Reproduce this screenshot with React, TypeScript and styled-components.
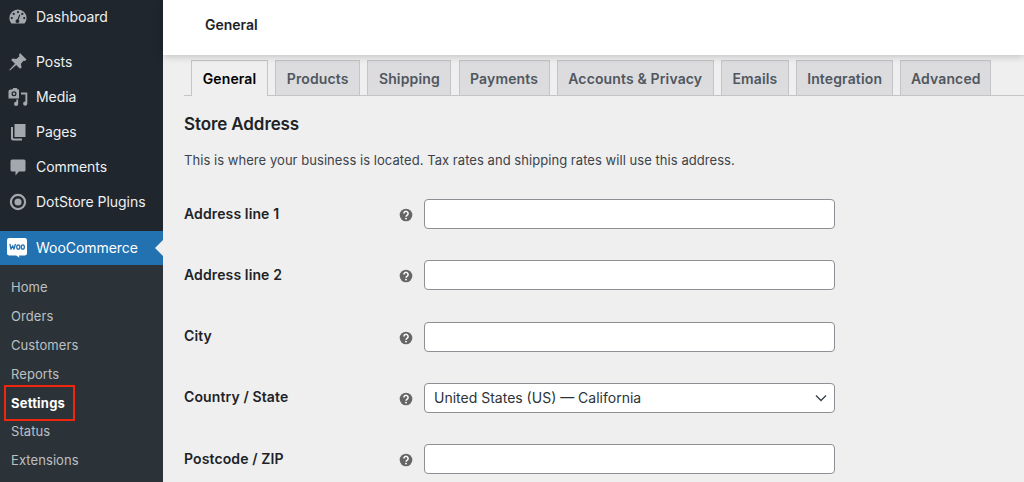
import React from "react";
import styled, { createGlobalStyle } from "styled-components";

const Global = createGlobalStyle`
  html, body { margin: 0; padding: 0; height: 100%; overflow: hidden; background: #f0f0f1; }
  body { font-family: Inter, "Liberation Sans", sans-serif; -webkit-font-smoothing: antialiased; }
  * { box-sizing: border-box; }
`;

const Page = styled.div`
  display: flex;
  width: 1024px;
  height: 482px;
  overflow: hidden;
  background: #efefef;
`;

const Sidebar = styled.nav`
  flex: 0 0 163px;
  height: 482px;
  background: #1f262d;
  display: flex;
  flex-direction: column;
`;

const MenuGroup = styled.div<{ $gap: number }>`
  margin-bottom: ${(p) => p.$gap}px;
`;

const MenuItem = styled.div<{ $short?: boolean }>`
  display: flex;
  align-items: center;
  height: ${(p) => (p.$short ? 33 : 35)}px;
  color: #eef0f1;
  font-size: 14px;
  letter-spacing: -0.05px;
  padding-left: 8px;
  gap: 8px;
  svg { flex: 0 0 20px; }
`;

const ActiveItem = styled(MenuItem)`
  position: relative;
  height: 34px;
  background: #2271b1;
  color: #fff;
  padding-left: 7px;
  gap: 9px;
  &::after {
    content: "";
    position: absolute;
    right: 0;
    top: 9px;
    border: 8px solid transparent;
    border-right-color: #efefef;
    border-left-width: 0;
  }
`;

const Submenu = styled.div`
  flex: 1;
  background: #2c3338;
  padding-top: 8px;
`;

const SubItem = styled.div<{ $current?: boolean }>`
  height: 28.8px;
  display: flex;
  align-items: center;
  padding-left: 11px;
  font-size: 13px;
  letter-spacing: ${(p) => (p.$current ? 0.2 : 0.08)}px;
  color: ${(p) => (p.$current ? "#fff" : "#bcc0c4")};
  font-weight: ${(p) => (p.$current ? 700 : 400)};
`;

const Highlight = styled.span`
  position: relative;
  &::before {
    content: "";
    position: absolute;
    left: -7px;
    right: -10px;
    top: -10px;
    bottom: -10px;
    border: 2px solid #f0270f;
  }
`;

const Main = styled.main`
  flex: 1;
  min-width: 0;
  display: flex;
  flex-direction: column;
`;

const Header = styled.header`
  flex: 0 0 55px;
  background: #fff;
  display: flex;
  align-items: center;
  padding: 0 0 6px 42px;
  font-size: 14px;
  font-weight: 600;
  color: #1d2327;
  box-shadow: 0 1px 8px rgba(0, 0, 0, 0.22);
  position: relative;
  z-index: 1;
`;

const Content = styled.div`
  padding: 5px 0 0 21px;
`;

const Tabs = styled.div`
  display: flex;
  gap: 7.2px;
  height: 36px;
  padding-left: 7px;
  border-bottom: 1px solid #c3c4c7;
`;

const Tab = styled.div<{ $active?: boolean; $w: number }>`
  flex: 0 0 ${(p) => p.$w}px;
  height: ${(p) => (p.$active ? 36 : 35)}px;
  border: 1px solid #c3c4c7;
  border-bottom: none;
  background: ${(p) => (p.$active ? "#efefef" : "#dcdcde")};
  color: ${(p) => (p.$active ? "#000" : "#50575e")};
  display: flex;
  align-items: center;
  justify-content: center;
  font-size: 14px;
  font-weight: 600;
  letter-spacing: 0.14px;
`;

const Title = styled.h2`
  margin: 18px 0 0;
  font-size: 17px;
  letter-spacing: -0.1px;
  line-height: 20px;
  font-weight: 600;
  color: #1d2327;
`;

const Description = styled.p`
  margin: 16px 0 0;
  font-size: 13px;
  letter-spacing: 0.05px;
  line-height: 20px;
  color: #3c434a;
`;

const Form = styled.div`
  margin-top: 29px;
  display: flex;
  flex-direction: column;
  gap: 31.25px;
`;

const Row = styled.div`
  display: grid;
  grid-template-columns: 215px 25px 411px;
  align-items: center;
  height: 30px;
`;

const Label = styled.label`
  font-size: 14px;
  font-weight: 600;
  letter-spacing: 0.12px;
  color: #1d2327;
  position: relative;
  top: -1px;
`;

const Help = styled.span`
  display: flex;
  width: 14px;
  position: relative;
  top: 1px;
`;

const Input = styled.div`
  height: 30px;
  width: 411px;
  background: #fff;
  border: 1px solid #8c8f94;
  border-radius: 4px;
`;

const Select = styled(Input)`
  display: flex;
  align-items: center;
  justify-content: space-between;
  padding: 0 5px 0 9px;
  font-size: 14px;
  color: #2c3338;
`;

const icon = { width: 20, height: 20, viewBox: "0 0 20 20", fill: "#a2a8ad" } as const;

const Dashboard = () => (
  <svg {...icon}><path fillRule="evenodd" d="M3.5 16.5h13A8.2 8.2 0 0 0 18.6 11 8.6 8.6 0 0 0 1.4 11c0 2.1.8 4 2.1 5.5zM10 4a1.1 1.1 0 1 1 0 2.2A1.1 1.1 0 0 1 10 4zM5.7 5.8a1.1 1.1 0 1 1 0 2.2 1.1 1.1 0 0 1 0-2.2zm8.6 0a1.1 1.1 0 1 1 0 2.2 1.1 1.1 0 0 1 0-2.2zM3.8 10a1.1 1.1 0 1 1 0 2.2 1.1 1.1 0 0 1 0-2.2zm12.4 0a1.1 1.1 0 1 1 0 2.2 1.1 1.1 0 0 1 0-2.2zm-4.9-2.6 1 .5-1.7 4.8a1.9 1.9 0 1 1-1.1-.4z" /></svg>
);
const Pin = () => (
  <svg {...icon}><path d="M12 1 18.5 7.5 17 9 15.6 8.7 12.9 11.7 13.6 15.4 12 16.8 8.2 13 2 18.6 1.2 18 7 11.8 3.2 8 4.6 6.4 8.3 7.1 11.3 4.4 11 3z" /></svg>
);
const MediaIcon = () => (
  <svg {...icon}><path fillRule="evenodd" d="M2.5 2.5h1.8l1-1.5h3.4l1 1.5h1.3v9H.5V4.5a2 2 0 0 1 2-2zM6 4.2a2.5 2.5 0 1 0 0 5 2.5 2.5 0 0 0 0-5z" /><circle cx="6" cy="6.7" r="1.2" /><path d="M13 5.5h6.3v11a2.1 2.1 0 1 1-1.9-2V7.5H13z" /><path d="M10.2 12.5v4.2a2.1 2.1 0 1 1-1.9-2v-2.2z" /></svg>
);
const PagesIcon = () => (
  <svg {...icon}><path d="M6.5 2H17.5V15H6.5z" /><path d="M3 5h2v10.5a1 1 0 0 0 1 1H14V18.5H5a2 2 0 0 1-2-2z" /></svg>
);
const CommentIcon = () => (
  <svg {...icon}><path d="M4 2.5h12a1.5 1.5 0 0 1 1.5 1.5v9a1.5 1.5 0 0 1-1.5 1.5h-5L7.5 18.5v-4H4A1.5 1.5 0 0 1 2.5 13V4A1.5 1.5 0 0 1 4 2.5z" /></svg>
);
const Target = () => (
  <svg {...icon}><path fillRule="evenodd" d="M10 1.8a8.2 8.2 0 1 0 0 16.4 8.2 8.2 0 0 0 0-16.4zm0 2.2a6 6 0 1 1 0 12 6 6 0 0 1 0-12z" /><circle cx="10" cy="10" r="3.6" /></svg>
);
const WooLogo = () => (
  <svg width="20" height="20" viewBox="0 0 20 20">
    <path fill="#fff" d="M2.2 0h15.6A2.2 2.2 0 0 1 20 2.2v13A2.2 2.2 0 0 1 17.8 17.4H12l.4 2.4-3.2-2.4H2.2A2.2 2.2 0 0 1 0 15.2v-13A2.2 2.2 0 0 1 2.2 0z" />
    <g fill="none" stroke="#2271b1" strokeWidth="1.3" strokeLinecap="round" strokeLinejoin="round">
      <path d="M3 6.5 4 11.2 5.7 7.8 7 11.2 8.3 6.5" />
      <ellipse cx="11.3" cy="9" rx="1.55" ry="2.2" />
      <ellipse cx="15.8" cy="9" rx="1.55" ry="2.2" />
    </g>
  </svg>
);
const HelpIcon = () => (
  <svg width="14" height="14" viewBox="0 0 14 14">
    <circle cx="7" cy="7" r="6.3" fill="#666" />
    <path d="M4.9 5.5a2.1 2.1 0 1 1 3.3 1.7c-.7.5-1.2.8-1.2 1.5" fill="none" stroke="#fff" strokeWidth="1.5" />
    <circle cx="7" cy="10.6" r="0.95" fill="#fff" />
  </svg>
);
const Chevron = () => (
  <svg width="16" height="16" viewBox="0 0 16 16"><path d="M3 5.5 8 10.5 13 5.5" fill="none" stroke="#3c434a" strokeWidth="1.4" /></svg>
);

const tabs: [string, number][] = [
  ["General", 77], ["Products", 85], ["Shipping", 84], ["Payments", 91],
  ["Accounts & Privacy", 157], ["Emails", 68], ["Integration", 97], ["Advanced", 91],
];
const subs = ["Home", "Orders", "Customers", "Reports", "Settings", "Status", "Extensions"];
const fields = ["Address line 1", "Address line 2", "City", "Country / State", "Postcode / ZIP"];

export default function App() {
  return (
    <Page>
      <Global />
      <Sidebar>
        <MenuGroup $gap={11.4}>
          <MenuItem $short><Dashboard />Dashboard</MenuItem>
        </MenuGroup>
        <MenuGroup $gap={11.6}>
          <MenuItem><Pin />Posts</MenuItem>
          <MenuItem><MediaIcon />Media</MenuItem>
          <MenuItem><PagesIcon />Pages</MenuItem>
          <MenuItem><CommentIcon />Comments</MenuItem>
          <MenuItem><Target />DotStore Plugins</MenuItem>
        </MenuGroup>
        <ActiveItem><WooLogo />WooCommerce</ActiveItem>
        <Submenu>
          {subs.map((s) =>
            s === "Settings" ? (
              <SubItem key={s} $current><Highlight>{s}</Highlight></SubItem>
            ) : (
              <SubItem key={s}>{s}</SubItem>
            )
          )}
        </Submenu>
      </Sidebar>
      <Main>
        <Header>General</Header>
        <Content>
          <Tabs>
            {tabs.map(([t, w], i) => (
              <Tab key={t} $w={w} $active={i === 0}>{t}</Tab>
            ))}
          </Tabs>
          <Title>Store Address</Title>
          <Description>This is where your business is located. Tax rates and shipping rates will use this address.</Description>
          <Form>
            {fields.map((f) => (
              <Row key={f}>
                <Label>{f}</Label>
                <Help><HelpIcon /></Help>
                {f === "Country / State" ? (
                  <Select><span>United States (US) — California</span><Chevron /></Select>
                ) : (
                  <Input />
                )}
              </Row>
            ))}
          </Form>
        </Content>
      </Main>
    </Page>
  );
}
